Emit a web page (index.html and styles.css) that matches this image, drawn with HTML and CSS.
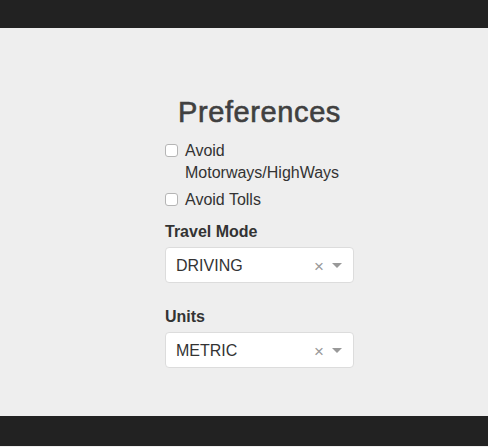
FILE: index.html
```html
<!DOCTYPE html>
<html>
<head>
<meta charset="utf-8">
<link rel="stylesheet" href="styles.css">
</head>
<body>
<header class="topbar"></header>
<main class="main">
  <div class="panel">
    <h1 class="title">Preferences</h1>
    <label class="check">
      <input type="checkbox" class="box">
      <span class="check-text">Avoid Motorways/HighWays</span>
    </label>
    <label class="check">
      <input type="checkbox" class="box">
      <span class="check-text">Avoid Tolls</span>
    </label>
    <div class="field">
      <div class="label">Travel Mode</div>
      <div class="select">
        <span class="value">DRIVING</span>
        <span class="clear">×</span>
        <span class="arrow"></span>
      </div>
    </div>
    <div class="field field-gap">
      <div class="label">Units</div>
      <div class="select">
        <span class="value">METRIC</span>
        <span class="clear">×</span>
        <span class="arrow"></span>
      </div>
    </div>
  </div>
</main>
<footer class="footbar"></footer>
</body>
</html>
```
FILE: styles.css
```css
html, body {
  margin: 0;
  padding: 0;
  background: #eeeeee;
  font-family: "Liberation Sans", Arial, sans-serif;
  color: #333;
}
.topbar {
  height: 28px;
  background: #222222;
}
.main {
  height: 388px;
  box-sizing: border-box;
  padding-top: 68px;
}
.panel {
  width: 189px;
  margin-left: 165px;
}
.title {
  margin: 0 0 10px 0;
  font-size: 29px;
  line-height: 33px;
  letter-spacing: 0.6px;
  font-weight: normal;
  color: #404040;
  -webkit-text-stroke: 0.6px #404040;
  text-align: center;
}
.check {
  display: flex;
  align-items: flex-start;
  font-size: 16px;
  line-height: 22px;
  color: #333;
  margin-bottom: 5px;
}
.check-text {
  padding-top: 1px;
  margin-bottom: -1px;
}
.box {
  -webkit-appearance: none;
  appearance: none;
  flex: none;
  width: 13px;
  height: 13px;
  margin: 5px 7px 0 0;
  border: 1px solid #b5b5b5;
  border-radius: 3px;
  background: #fff;
  box-sizing: border-box;
}
.field {
  margin-top: 10px;
}
.field-gap {
  margin-top: 22px;
}
.label {
  font-size: 16px;
  line-height: 22px;
  font-weight: bold;
  color: #333;
  padding-top: 1px;
  margin-bottom: 4px;
}
.select {
  display: flex;
  align-items: center;
  height: 36px;
  box-sizing: border-box;
  border: 1px solid #dcdcdc;
  border-radius: 4px;
  background: #fff;
  padding: 2px 11px 0 10px;
  font-size: 16px;
  color: #333;
}
.value {
  flex: 1;
}
.clear {
  color: #999;
  font-size: 17px;
  line-height: 1;
  margin-right: 8px;
}
.arrow {
  width: 0;
  height: 0;
  border-left: 5px solid transparent;
  border-right: 5px solid transparent;
  border-top: 5px solid #999;
  margin-bottom: 1px;
}
.footbar {
  height: 30px;
  background: #222222;
}
```
